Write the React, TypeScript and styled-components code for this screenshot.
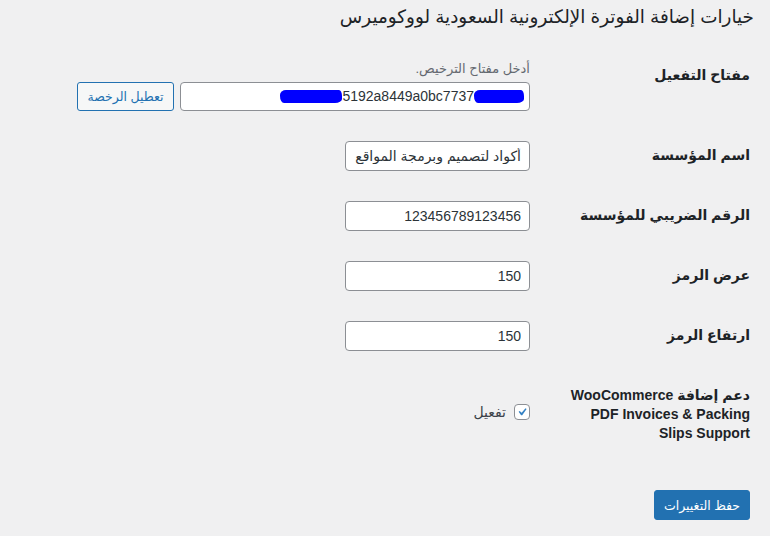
import React from 'react';
import styled, { createGlobalStyle } from 'styled-components';

const GlobalStyle = createGlobalStyle`
    html, body {
        margin: 0;
        padding: 0;
        background: #f0f0f1;
    }
    body {
        font-family: "Liberation Sans", "DejaVu Sans", sans-serif;
        font-size: 13px;
        color: #1d2327;
    }
`;

const Wrap = styled.div`
    direction: rtl;
    width: 770px;
    height: 536px;
    box-sizing: border-box;
    padding: 0 20px 0 0;
    overflow: hidden;
`;

const Title = styled.h1`
    margin: 0 -4px 0 0;
    padding: 5px 0 4px 0;
    font-size: 18.4px;
    font-weight: 400;
    line-height: 1.3;
    color: #1d2327;
`;

const Table = styled.table`
    border-collapse: collapse;
    margin-top: 13px;
`;

const Th = styled.th`
    width: 186px;
    padding: 20px 0 20px 24px;
    text-align: right;
    vertical-align: top;
    font-size: 14px;
    font-weight: 600;
    line-height: 1.35;
    color: #1d2327;
`;

const Td = styled.td`
    padding: 15px 10px;
    vertical-align: middle;
    line-height: 1.3;
`;

const Description = styled.p`
    margin: 0 0 4px;
    font-size: 13px;
    color: #646970;
`;

const FieldRow = styled.div`
    display: flex;
    align-items: center;
    gap: 6px;
`;

const Input = styled.input`
    box-sizing: border-box;
    width: 185px;
    height: 30px;
    padding: 0 8px;
    border: 1px solid #8c8f94;
    border-radius: 4px;
    background: #fff;
    font-family: "Liberation Sans", "DejaVu Sans", sans-serif;
    font-size: 14px;
    color: #2c3338;
    direction: rtl;
    text-align: right;
    outline: none;
`;

const KeyField = styled.div`
    box-sizing: border-box;
    width: 350px;
    height: 29px;
    padding: 0 5px 0 8px;
    border: 1px solid #8c8f94;
    border-radius: 4px;
    background: #fff;
    display: flex;
    align-items: center;
    justify-content: flex-end;
    direction: ltr;
    font-size: 14px;
    color: #2c3338;
`;

const Redact = styled.span<{ $w: number }>`
    display: inline-block;
    width: ${p => p.$w}px;
    height: 13px;
    background: #0000ff;
    border-radius: 6px 3px 7px 4px / 5px 6px 4px 7px;
    margin-top: 1px;
`;

const SecondaryButton = styled.button`
    box-sizing: border-box;
    height: 29px;
    width: 97px;
    padding: 0;
    border: 1px solid #2271b1;
    border-radius: 3px;
    background: #f6f7f7;
    color: #2271b1;
    font-family: "Liberation Sans", "DejaVu Sans", sans-serif;
    font-size: 12.5px;
    white-space: nowrap;
    cursor: pointer;
`;

const CheckLabel = styled.label`
    display: inline-flex;
    align-items: center;
    gap: 8px;
    font-size: 14px;
    color: #3c434a;
`;

const CheckBox = styled.span`
    box-sizing: border-box;
    width: 16px;
    height: 16px;
    border: 1px solid #8c8f94;
    border-radius: 4px;
    background: #fff;
    display: inline-flex;
    align-items: center;
    justify-content: center;
`;

const Submit = styled.p`
    margin: 0;
    padding: 28px 0 0;
`;

const PrimaryButton = styled.button`
    box-sizing: border-box;
    height: 30px;
    width: 96px;
    padding: 0;
    border: 1px solid #2271b1;
    border-radius: 3px;
    background: #2271b1;
    color: #fff;
    font-family: "Liberation Sans", "DejaVu Sans", sans-serif;
    font-size: 12.5px;
    white-space: nowrap;
    cursor: pointer;
`;

const fields = [
    { label: 'اسم المؤسسة', value: 'أكواد لتصميم وبرمجة المواقع' },
    { label: 'الرقم الضريبي للمؤسسة', value: '123456789123456' },
    { label: 'عرض الرمز', value: '150' },
    { label: 'ارتفاع الرمز', value: '150' },
];

const App = (): React.ReactElement => {
    return (
        <Wrap>
            <GlobalStyle />
            <Title>خيارات إضافة الفوترة الإلكترونية السعودية لووكوميرس</Title>
            <Table>
                <tbody>
                    <tr>
                        <Th>مفتاح التفعيل</Th>
                        <Td>
                            <Description>أدخل مفتاح الترخيص.</Description>
                            <FieldRow>
                                <KeyField>
                                    <Redact $w={62} />
                                    <span>5192a8449a0bc7737</span>
                                    <Redact $w={50} />
                                </KeyField>
                                <SecondaryButton type='button'>تعطيل الرخصة</SecondaryButton>
                            </FieldRow>
                        </Td>
                    </tr>
                    {fields.map((f, i) => (
                        <tr key={i}>
                            <Th>{f.label}</Th>
                            <Td>
                                <Input type='text' defaultValue={f.value} />
                            </Td>
                        </tr>
                    ))}
                    <tr>
                        <Th>دعم إضافة WooCommerce PDF Invoices &amp; Packing Slips Support</Th>
                        <Td>
                            <CheckLabel>
                                <CheckBox>
                                    <svg width='18' height='18' viewBox='0 0 20 20'>
                                        <path d='M15 4.6l1.6 1.1-6.3 9H8.7L5.2 9.8l1.5-1.4 2.8 2.6z' fill='#3582c4' />
                                    </svg>
                                </CheckBox>
                                تفعيل
                            </CheckLabel>
                        </Td>
                    </tr>
                </tbody>
            </Table>
            <Submit>
                <PrimaryButton type='button'>حفظ التغييرات</PrimaryButton>
            </Submit>
        </Wrap>
    );
};

export default App;
